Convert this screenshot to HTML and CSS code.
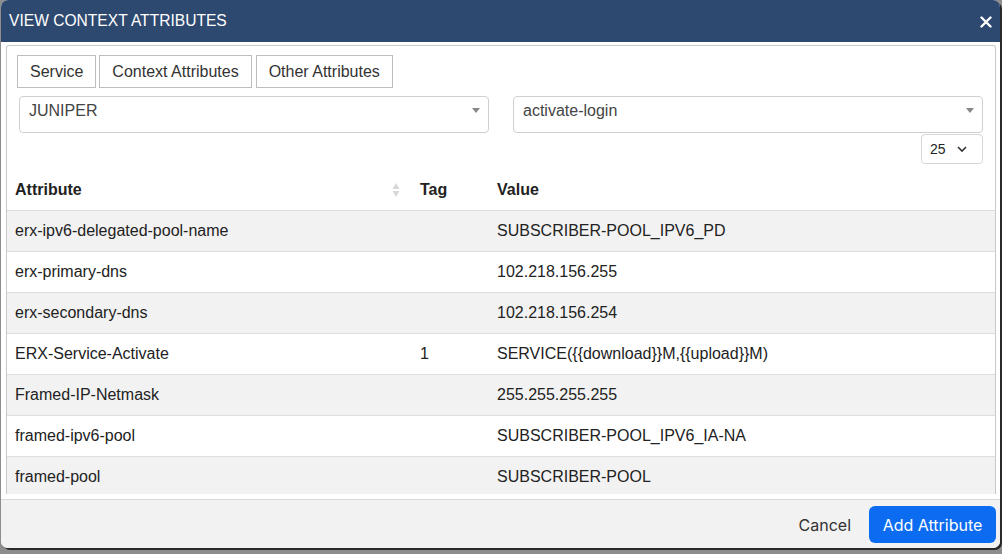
FILE: index.html
```html
<!DOCTYPE html>
<html>
<head>
<meta charset="utf-8">
<link rel="stylesheet" href="styles.css">
</head>
<body>
<div class="modal">
  <div class="modal-header">
    <span class="modal-title">VIEW CONTEXT ATTRIBUTES</span>
    <svg class="close" width="12" height="12" viewBox="0 0 12 12"><path d="M1.5 1.5 L10.5 10.5 M10.5 1.5 L1.5 10.5" stroke="#fff" stroke-width="2.4" stroke-linecap="round"/></svg>
  </div>
  <div class="modal-body">
    <div class="panel">
      <div class="tabs">
        <div class="tab">Service</div>
        <div class="tab">Context Attributes</div>
        <div class="tab">Other Attributes</div>
      </div>
      <div class="selects">
        <div class="select"><span>JUNIPER</span><i class="caret"></i></div>
        <div class="select"><span>activate-login</span><i class="caret"></i></div>
      </div>
      <div class="pager-row">
        <div class="page-size"><span>25</span><svg width="12" height="8" viewBox="0 0 12 8"><path d="M2 2 L6 6 L10 2" fill="none" stroke="#333" stroke-width="1.6"/></svg></div>
      </div>
      <div class="table-wrap">
        <table class="grid">
          <colgroup><col class="c1"><col class="c2"><col class="c3"></colgroup>
          <thead>
            <tr><th class="sortable">Attribute<svg class="sort" width="8" height="16" viewBox="0 0 8 16"><path d="M4 1 L7.5 7 L0.5 7 Z M4 15 L7.5 9 L0.5 9 Z" fill="#d8d8d8"/></svg></th><th>Tag</th><th>Value</th></tr>
          </thead>
          <tbody>
            <tr><td>erx-ipv6-delegated-pool-name</td><td></td><td>SUBSCRIBER-POOL_IPV6_PD</td></tr>
            <tr><td>erx-primary-dns</td><td></td><td>102.218.156.255</td></tr>
            <tr><td>erx-secondary-dns</td><td></td><td>102.218.156.254</td></tr>
            <tr><td>ERX-Service-Activate</td><td>1</td><td>SERVICE({{download}}M,{{upload}}M)</td></tr>
            <tr><td>Framed-IP-Netmask</td><td></td><td>255.255.255.255</td></tr>
            <tr><td>framed-ipv6-pool</td><td></td><td>SUBSCRIBER-POOL_IPV6_IA-NA</td></tr>
            <tr><td>framed-pool</td><td></td><td>SUBSCRIBER-POOL</td></tr>
          </tbody>
        </table>
      </div>
    </div>
  </div>
  <div class="modal-footer">
    <button class="btn-cancel">Cancel</button>
    <button class="btn-primary">Add Attribute</button>
  </div>
</div>
</body>
</html>
```
FILE: styles.css
```css
html, body {
  margin: 0;
  padding: 0;
}
body {
  width: 1002px;
  height: 554px;
  overflow: hidden;
  background: #8d8d8d;
  font-family: "Liberation Sans", Arial, sans-serif;
}
.modal {
  margin-left: 1px;
  width: 999px;
  height: 548px;
  background: #fff;
  border-radius: 7px;
  display: flex;
  flex-direction: column;
  overflow: hidden;
  box-shadow: 2px 2px 0 #2a2a2a;
}
.modal-header {
  height: 42px;
  flex: none;
  background: #2e4970;
  display: flex;
  align-items: center;
  justify-content: space-between;
  padding: 0 8px 0 8px;
}
.modal-title {
  color: #fff;
  font-size: 15.6px;
}
.close {
  display: block;
  margin-top: 1px;
}
.modal-body {
  flex: 1;
  min-height: 0;
  display: flex;
  padding: 3px 4px 5px 5px;
  background: #fff;
}
.panel {
  flex: 1;
  min-width: 0;
  border: 1px solid #c9c9c9;
  border-bottom: none;
  border-radius: 3px 3px 0 0;
  display: flex;
  flex-direction: column;
  overflow: hidden;
}
.tabs {
  display: flex;
  gap: 3px;
  padding: 9px 10px 0;
}
.tab {
  height: 31px;
  line-height: 31px;
  padding: 0 12px;
  border: 1px solid #bdbdbd;
  font-size: 16px;
  color: #333;
  background: #fff;
}
.tab + .tab + .tab {
  margin-left: 1px;
}
.selects {
  display: grid;
  grid-template-columns: 1fr 1fr;
  gap: 24px;
  padding: 8px 12px 0;
}
.select {
  height: 35px;
  border: 1px solid #cfcfcf;
  border-radius: 4px;
  position: relative;
  padding-left: 9px;
  line-height: 28px;
  font-size: 16px;
  color: #444;
}
.caret {
  position: absolute;
  right: 8px;
  top: 11px;
  width: 0;
  height: 0;
  border-left: 4px solid transparent;
  border-right: 4px solid transparent;
  border-top: 5px solid #888;
}
.pager-row {
  display: flex;
  justify-content: flex-end;
  padding: 1px 12px 0;
}
.page-size {
  height: 28px;
  border: 1px solid #d6d6d6;
  border-radius: 4px;
  display: flex;
  align-items: center;
  gap: 10px;
  padding-left: 8px;
  width: 52px;
  font-size: 14px;
  color: #222;
}
.page-size svg {
  display: block;
}
.table-wrap {
  flex: 1;
  min-height: 0;
  overflow: hidden;
  margin-top: 6px;
}
.grid {
  width: 100%;
  border-collapse: collapse;
  table-layout: fixed;
  font-size: 16px;
  color: #222;
}
.c1 { width: 405px; }
.c2 { width: 77px; }
.grid th {
  text-align: left;
  font-weight: bold;
  height: 40px;
  padding: 0 8px;
  border-bottom: 1px solid #dcdcdc;
  vertical-align: middle;
}
.grid th.sortable {
  position: relative;
}
.sort {
  position: absolute;
  right: 12px;
  top: 12px;
}
.grid td {
  height: 40px;
  padding: 0 8px;
  border-bottom: 1px solid #dedede;
  white-space: nowrap;
}
.grid tbody tr:nth-child(odd) td {
  background: #f2f2f2;
}
.modal-footer {
  height: 47px;
  flex: none;
  background: #f2f2f2;
  border-top: 1px solid #dadada;
  display: flex;
  align-items: center;
  justify-content: flex-end;
  gap: 6px;
  padding-right: 4px;
  padding-top: 1px;
}
.btn-cancel, .btn-primary {
  font-family: Inter, "Liberation Sans", sans-serif;
  font-size: 16px;
  height: 37px;
  border: none;
  border-radius: 6px;
  padding: 0 12px;
  cursor: pointer;
}
.btn-cancel {
  background: transparent;
  color: #333;
}
.btn-primary {
  background: #0b6cf2;
  color: #fff;
  width: 127px;
  padding: 0;
}
```
